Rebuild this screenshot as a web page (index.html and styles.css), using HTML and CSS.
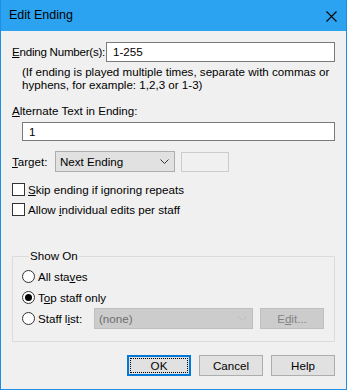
FILE: index.html
```html
<!DOCTYPE html>
<html lang="en">
<head>
    <meta charset="UTF-8">
    <title>Edit Ending</title>
    <link rel="stylesheet" href="styles.css">
</head>
<body>
    <div class="window">
        <div class="titlebar">
            <span class="title">Edit Ending</span>
            <svg class="close" width="11" height="11" viewBox="0 0 11 11">
                <path d="M0.5 0.5 L10.5 10.5 M10.5 0.5 L0.5 10.5" stroke="#000" stroke-width="1.1"/>
            </svg>
        </div>
        <div class="content">
            <div class="row first">
                <label class="lbl-number"><u>E</u>nding Number(s):</label>
                <div class="edit wide">1-255</div>
            </div>
            <p class="hint">(If ending is played multiple times, separate with commas or<br>hyphens, for example: 1,2,3 or 1-3)</p>

            <label class="lbl-alt"><u>A</u>lternate Text in Ending:</label>
            <div class="edit alt">1</div>

            <div class="row target">
                <label class="lbl-target"><u>T</u>arget:</label>
                <div class="combo">
                    <span>Next Ending</span>
                    <svg class="arrow" width="9" height="5" viewBox="0 0 9 5">
                        <path d="M0.5 0.5 L4.5 4.5 L8.5 0.5" fill="none" stroke="#333" stroke-width="1"/>
                    </svg>
                </div>
                <div class="edit blank"></div>
            </div>

            <div class="check first-check"><span class="box"></span><span><u>S</u>kip ending if ignoring repeats</span></div>
            <div class="check"><span class="box"></span><span>Allow <u>i</u>ndividual edits per staff</span></div>

            <fieldset class="group">
                <legend>Show On</legend>
                <div class="radio"><span class="dot"></span><span>All sta<u>v</u>es</span></div>
                <div class="radio"><span class="dot on"></span><span>T<u>o</u>p staff only</span></div>
                <div class="radio staff">
                    <span class="dot"></span><span class="lbl-staff">Staff l<u>i</u>st:</span>
                    <div class="combo disabled">
                        <span>(none)</span>
                        <svg class="arrow" width="9" height="5" viewBox="0 0 9 5">
                            <path d="M0.5 0.5 L4.5 4.5 L8.5 0.5" fill="none" stroke="#bcbcbc" stroke-width="1"/>
                        </svg>
                    </div>
                    <div class="btn disabled">E<u>d</u>it...</div>
                </div>
            </fieldset>

            <div class="buttons">
                <div class="btn default"><span class="focus">OK</span></div>
                <div class="btn">Cancel</div>
                <div class="btn">Help</div>
            </div>
        </div>
    </div>
</body>
</html>
```

FILE: styles.css
```css
body {
    margin: 0;
    font-family: "Liberation Sans", Arial, sans-serif;
    font-size: 11.6px;
    line-height: 14px;
    color: #000;
    white-space: nowrap;
}
u {
    text-decoration: underline;
    text-underline-offset: 1px;
}
.window {
    width: 347px;
    height: 390px;
    box-sizing: border-box;
    border: 1px solid #1c8ee6;
    border-top: none;
    background-color: #f0f0f0;
}
.titlebar {
    height: 31px;
    background-color: #2ba3f0;
    display: flex;
    align-items: center;
    justify-content: space-between;
    padding: 0 9px 0 8px;
}
.title {
    font-size: 12.5px;
    padding-bottom: 1px;
}
.close {
    margin-top: 1px;
}
.content {
    padding: 0 11px;
}
.row {
    display: flex;
    align-items: center;
}
.row.first {
    margin-top: 11px;
}
.lbl-number {
    width: 94px;
    flex-shrink: 0;
    letter-spacing: -0.25px;
}
.edit {
    height: 20px;
    box-sizing: border-box;
    border: 1px solid #7a7a7a;
    background-color: #fff;
    padding: 0 6px;
    line-height: 18px;
}
.wide {
    flex: 1;
}
.hint {
    margin: 3px 0 0 10px;
    line-height: 13px;
}
.lbl-alt {
    display: block;
    margin-top: 13px;
    line-height: 14px;
}
.edit.alt {
    margin: 4px 0 0 10px;
    height: 19px;
}
.row.target {
    margin-top: 10px;
}
.lbl-target {
    width: 43px;
}
.combo {
    width: 120px;
    height: 21px;
    box-sizing: border-box;
    border: 1px solid #adadad;
    background-color: #e1e1e1;
    display: flex;
    align-items: center;
    justify-content: space-between;
    padding: 0 5px 0 4px;
}
.edit.blank {
    width: 48px;
    margin-left: 6px;
    border-color: #cccccc;
    background-color: #f0f0f0;
}
.check {
    display: flex;
    align-items: center;
    margin-top: 7px;
    height: 13px;
}
.check.first-check {
    margin-top: 11px;
}
.box {
    width: 13px;
    height: 13px;
    box-sizing: border-box;
    border: 1px solid #333;
    background-color: #fff;
    margin-right: 3px;
}
.group {
    margin: 33px 0 0 0;
    padding: 3px 0 12px 9px;
    border: 1px solid #dcdcdc;
}
.group legend {
    padding: 0 1px;
    margin-left: 7px;
    line-height: 14px;
}
.radio {
    display: flex;
    align-items: center;
    height: 21px;
}
.dot {
    width: 13px;
    height: 13px;
    box-sizing: border-box;
    border: 1px solid #333;
    border-radius: 50%;
    background-color: #fff;
    margin-right: 3px;
    display: flex;
    align-items: center;
    justify-content: center;
}
.dot.on::after {
    content: "";
    width: 7px;
    height: 7px;
    border-radius: 50%;
    background-color: #000;
}
.lbl-staff {
    width: 56px;
}
.combo.disabled {
    width: 159px;
    border-color: #bfbfbf;
    background-color: #cccccc;
    color: #6d6d6d;
}
.btn {
    width: 64px;
    height: 21px;
    box-sizing: border-box;
    border: 1px solid #adadad;
    background-color: #e1e1e1;
    display: flex;
    align-items: center;
    justify-content: center;
}
.btn.disabled {
    margin-left: 7px;
    border-color: #bfbfbf;
    background-color: #cccccc;
    color: #838383;
}
.buttons {
    display: flex;
    justify-content: flex-end;
    gap: 8px;
    margin-top: 13px;
}
.btn.default {
    border: 2px solid #0078d7;
}
.focus {
    width: 56px;
    height: 13px;
    border: 1px dotted #000;
    display: flex;
    align-items: center;
    justify-content: center;
}
```
